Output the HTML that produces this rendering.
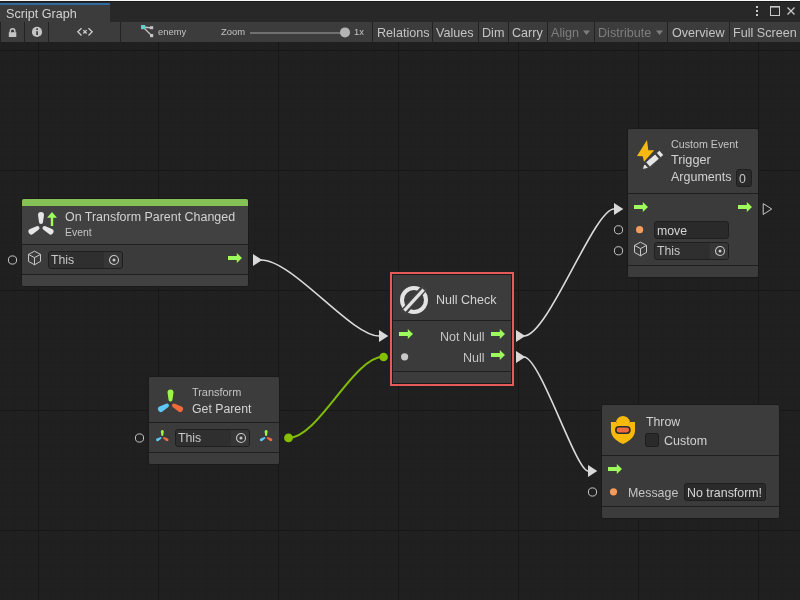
<!DOCTYPE html>
<html><head><meta charset="utf-8"><style>
html,body{margin:0;padding:0;}
body{width:800px;height:600px;position:relative;overflow:hidden;background:#202020;font-family:"Liberation Sans",sans-serif;}
.r{position:absolute;box-sizing:content-box;}
.t{position:absolute;white-space:nowrap;line-height:1;will-change:transform;}
#grid{position:absolute;left:0;top:42px;width:800px;height:558px;background-color:#202020;
background-image:linear-gradient(to right,#171717 1px,transparent 1px),linear-gradient(to bottom,#171717 1px,transparent 1px),linear-gradient(to right,#1e1e1e 1px,transparent 1px),linear-gradient(to bottom,#1e1e1e 1px,transparent 1px);
background-size:120px 120px,120px 120px,12px 12px,12px 12px;
background-position:38px 8px,38px 8px,2px 8px,2px 8px;}
</style></head><body>
<div id="grid"></div>
<div class="r" style="left:0px;top:0px;width:800px;height:1px;background:#f8f8f8;"></div>
<div class="r" style="left:0px;top:1px;width:800px;height:1px;background:#191919;"></div>
<div class="r" style="left:0px;top:2px;width:800px;height:20px;background:#282828;"></div>
<div class="r" style="left:0px;top:3px;width:110px;height:19px;background:#3c3c3c;"></div>
<div class="r" style="left:0px;top:3px;width:110px;height:2px;background:#2f6aa2;border-top-right-radius:1px"></div>
<div class="t" style="left:5.60px;top:8.00px;font-size:12.6px;color:#d2d2d2;">Script Graph</div>
<svg class="r" style="left:750px;top:2px" width="50" height="20" viewBox="0 0 50 20">
<rect x="6" y="4" width="2" height="2" fill="#c8c8c8"/><rect x="6" y="8" width="2" height="2" fill="#c8c8c8"/><rect x="6" y="12" width="2" height="2" fill="#c8c8c8"/>
<rect x="20.5" y="4.5" width="9" height="9" fill="none" stroke="#c8c8c8" stroke-width="1"/><rect x="20" y="4" width="10" height="1.6" fill="#c8c8c8"/>
<path d="M37.5 5.5 L44.5 12.5 M44.5 5.5 L37.5 12.5" stroke="#c8c8c8" stroke-width="1.3"/>
</svg>
<div class="r" style="left:0px;top:22px;width:800px;height:20px;background:#3c3c3c;"></div>
<div class="r" style="left:0px;top:22px;width:1px;height:20px;background:#232323;"></div>
<div class="r" style="left:24px;top:22px;width:1px;height:20px;background:#232323;"></div>
<div class="r" style="left:48px;top:22px;width:1px;height:20px;background:#232323;"></div>
<div class="r" style="left:120px;top:22px;width:1px;height:20px;background:#232323;"></div>
<div class="r" style="left:372px;top:22px;width:1px;height:20px;background:#232323;"></div>
<div class="r" style="left:432px;top:22px;width:1px;height:20px;background:#232323;"></div>
<div class="r" style="left:478px;top:22px;width:1px;height:20px;background:#232323;"></div>
<div class="r" style="left:508px;top:22px;width:1px;height:20px;background:#232323;"></div>
<div class="r" style="left:547px;top:22px;width:1px;height:20px;background:#232323;"></div>
<div class="r" style="left:594px;top:22px;width:1px;height:20px;background:#232323;"></div>
<div class="r" style="left:667px;top:22px;width:1px;height:20px;background:#232323;"></div>
<div class="r" style="left:729px;top:22px;width:1px;height:20px;background:#232323;"></div>
<svg class="r" style="left:0px;top:22px" width="24" height="20" viewBox="0 0 24 20">
<path d="M10.3 10.5 V9 a2.3 2.3 0 0 1 4.6 0 V10.5" fill="none" stroke="#c4c4c4" stroke-width="1.4"/>
<rect x="8.8" y="10.2" width="7.5" height="4.8" fill="#c4c4c4"/></svg>
<svg class="r" style="left:25px;top:22px" width="23" height="20" viewBox="0 0 23 20">
<circle cx="12" cy="9.9" r="5.1" fill="#c4c4c4"/><rect x="11.2" y="9.2" width="1.7" height="3.8" fill="#3c3c3c"/><rect x="11.2" y="6.4" width="1.7" height="1.6" fill="#3c3c3c"/></svg>
<svg class="r" style="left:65px;top:22px" width="40" height="20" viewBox="0 0 40 20">
<path d="M16.5 6.2 L12.8 9.8 L16.5 13.5 M23.5 6.2 L27.2 9.8 L23.5 13.5 M18.3 8.1 L21.7 11.5 M21.7 8.1 L18.3 11.5" fill="none" stroke="#d0d0d0" stroke-width="1.25"/></svg>
<svg class="r" style="left:141px;top:25px" width="13" height="13" viewBox="0 0 13 13">
<path d="M2 2 L11 3 M2 2 L10.5 10.5" stroke="#c4c4c4" stroke-width="1.3"/>
<rect x="0" y="0" width="4.2" height="4.2" fill="#5bd3c8"/><rect x="9" y="1.2" width="3.2" height="3" fill="#c4c4c4"/><rect x="9" y="9" width="3.2" height="3.2" fill="#c4c4c4"/></svg>
<div class="t" style="left:157.80px;top:27.00px;font-size:9.4px;color:#c4c4c4;">enemy</div>
<div class="t" style="left:220.60px;top:27.00px;font-size:9.4px;color:#c4c4c4;">Zoom</div>
<div class="r" style="left:250px;top:32px;width:95px;height:2px;background:#707070;"></div>
<svg class="r" style="left:339px;top:26px" width="12" height="12"><circle cx="6" cy="6.4" r="5" fill="#b4b4b4"/></svg>
<div class="t" style="left:353.60px;top:27.00px;font-size:9.4px;color:#c4c4c4;">1x</div>
<div class="t" style="left:376.60px;top:27.00px;font-size:12.6px;color:#c4c4c4;">Relations</div>
<div class="t" style="left:436.20px;top:27.00px;font-size:12.6px;color:#c4c4c4;">Values</div>
<div class="t" style="left:482.20px;top:27.00px;font-size:12.6px;color:#c4c4c4;">Dim</div>
<div class="t" style="left:511.80px;top:27.00px;font-size:12.6px;color:#c4c4c4;">Carry</div>
<div class="t" style="left:551.00px;top:27.00px;font-size:12.6px;color:#7e7e7e;">Align</div>
<svg class="r" style="left:583px;top:30px" width="8" height="6"><path d="M0 0.5 H7 L3.5 5Z" fill="#7e7e7e"/></svg>
<div class="t" style="left:597.60px;top:27.00px;font-size:12.6px;color:#7e7e7e;">Distribute</div>
<svg class="r" style="left:656px;top:30px" width="8" height="6"><path d="M0 0.5 H7 L3.5 5Z" fill="#7e7e7e"/></svg>
<div class="t" style="left:671.60px;top:27.00px;font-size:12.6px;color:#c4c4c4;">Overview</div>
<div class="t" style="left:732.80px;top:27.00px;font-size:12.6px;color:#c4c4c4;">Full Screen</div>
<svg class="r" style="left:0;top:0" width="800" height="600"><path d="M261 260 C293 260 351 336 379 336" fill="none" stroke="#dadada" stroke-width="1.6"/><path d="M288.5 437.9 C318.5 437.9 353.3 356.8 383.3 356.8" fill="none" stroke="#80bc08" stroke-width="2"/><path d="M524 336 C548 336 594 209 614 209" fill="none" stroke="#dadada" stroke-width="1.6"/><path d="M524 357 C540 357 576 471 588 471" fill="none" stroke="#dadada" stroke-width="1.6"/></svg>
<div class="r" style="left:21px;top:198px;width:226px;height:87px;border:1px solid #1a1a1a;border-radius:3px;background:#3b3b3b;overflow:hidden"><div class="r" style="left:0;top:0;width:226px;height:45px;background:#414141"></div><div class="r" style="left:0;top:45px;width:226px;height:1px;background:#1f1f1f"></div><div class="r" style="left:0;top:75px;width:226px;height:1px;background:#1f1f1f"></div><div class="r" style="left:0;top:76px;width:226px;height:11px;background:#414141"></div><div class="r" style="left:0;top:0;width:226px;height:7px;background:#85c256"></div></div>
<svg class="r" style="left:25px;top:210px" width="32" height="32"><path d="M18.00 12.00 L19.00 5.00 A3 3 0 0 0 13.00 5.00 L14.00 12.00 A2 2 0 0 0 18.00 12.00 Z" fill="#e6e6e6"/><path d="M11.54 16.27 L4.97 18.90 A3 3 0 0 0 7.97 24.10 L13.54 19.73 A2 2 0 0 0 11.54 16.27 Z" fill="#e6e6e6"/><path d="M18.46 19.73 L24.03 24.10 A3 3 0 0 0 27.03 18.90 L20.46 16.27 A2 2 0 0 0 18.46 19.73 Z" fill="#e6e6e6"/></svg>
<svg class="r" style="left:46px;top:211px" width="12" height="16" viewBox="0 0 12 16"><path d="M6 1 L11 6.8 H7.2 V15 H4.8 V6.8 H1Z" fill="#9efb5c"/></svg>
<div class="t" style="left:64.60px;top:211.00px;font-size:12.45px;color:#d2d2d2;">On Transform Parent Changed</div>
<div class="t" style="left:64.80px;top:228.00px;font-size:10.4px;color:#c4c4c4;">Event</div>
<svg class="r" style="left:6px;top:254px" width="13" height="13"><circle cx="6.5" cy="6" r="4.1" fill="none" stroke="#c8c8c8" stroke-width="1"/></svg>
<svg class="r" style="left:27px;top:250px" width="16" height="16" viewBox="0 0 16 16"><path d="M7.5 1.2 L13.5 4.4 V11.4 L7.5 14.8 L1.5 11.4 V4.4Z M1.5 4.4 L7.5 7.6 L13.5 4.4 M7.5 7.6 V14.8" fill="none" stroke="#c8c8c8" stroke-width="1" stroke-linejoin="round"/></svg>
<div class="r" style="left:48px;top:251px;width:73px;height:16px;border:1px solid #1f1f1f;border-radius:3px;background:#2f2f2f;overflow:hidden"><div class="r" style="left:55px;top:0;width:18px;height:16px;background:#363636"></div></div>
<div class="t" style="left:50.80px;top:254.00px;font-size:12.3px;color:#c8c8c8;">This</div>
<svg class="r" style="left:106.5px;top:253.0px" width="14" height="14"><circle cx="7" cy="7" r="4.5" fill="none" stroke="#c8c8c8" stroke-width="1.1"/><circle cx="7" cy="7" r="1.5" fill="#c8c8c8"/></svg>
<svg class="r" style="left:228px;top:253px" width="14" height="10" viewBox="0 0 14 10"><path d="M0 3 H8.8 V0 L14 5 L8.8 10 V7 H0Z" fill="#9efb5c"/></svg>
<svg class="r" style="left:253px;top:254px" width="10" height="12" viewBox="0 0 10 12"><path d="M0 0 L9.3 6 L0 12Z" fill="#d9d9d9"/></svg>
<div class="r" style="left:148px;top:376px;width:130px;height:87px;border:1px solid #1a1a1a;border-radius:3px;background:#3b3b3b;overflow:hidden"><div class="r" style="left:0;top:0;width:130px;height:45px;background:#3c3c3c"></div><div class="r" style="left:0;top:45px;width:130px;height:1px;background:#1f1f1f"></div><div class="r" style="left:0;top:75px;width:130px;height:1px;background:#1f1f1f"></div><div class="r" style="left:0;top:76px;width:130px;height:11px;background:#3c3c3c"></div></div>
<svg class="r" style="left:154px;top:387px" width="32" height="32"><path d="M18.50 12.50 L19.50 5.50 A3 3 0 0 0 13.50 5.50 L14.50 12.50 A2 2 0 0 0 18.50 12.50 Z" fill="#9ef54a"/><path d="M12.04 16.77 L5.47 19.40 A3 3 0 0 0 8.47 24.60 L14.04 20.23 A2 2 0 0 0 12.04 16.77 Z" fill="#5ec8f7"/><path d="M18.96 20.23 L24.53 24.60 A3 3 0 0 0 27.53 19.40 L20.96 16.77 A2 2 0 0 0 18.96 20.23 Z" fill="#f26a3c"/></svg>
<div class="t" style="left:191.90px;top:387.00px;font-size:10.9px;color:#c4c4c4;">Transform</div>
<div class="t" style="left:191.90px;top:403.00px;font-size:12.3px;color:#d2d2d2;">Get Parent</div>
<svg class="r" style="left:133px;top:432px" width="13" height="13"><circle cx="6.5" cy="6" r="4.1" fill="none" stroke="#c8c8c8" stroke-width="1"/></svg>
<svg class="r" style="left:154px;top:429px" width="16" height="16"><path d="M9.30 6.00 L9.80 2.50 A1.5 1.5 0 0 0 6.80 2.50 L7.30 6.00 A1.0 1.0 0 0 0 9.30 6.00 Z" fill="#9ef54a"/><path d="M6.07 8.13 L2.79 9.45 A1.5 1.5 0 0 0 4.29 12.05 L7.07 9.87 A1.0 1.0 0 0 0 6.07 8.13 Z" fill="#5ec8f7"/><path d="M9.53 9.87 L12.31 12.05 A1.5 1.5 0 0 0 13.81 9.45 L10.53 8.13 A1.0 1.0 0 0 0 9.53 9.87 Z" fill="#f26a3c"/></svg>
<div class="r" style="left:175px;top:429px;width:73px;height:16px;border:1px solid #1f1f1f;border-radius:3px;background:#2f2f2f;overflow:hidden"><div class="r" style="left:55px;top:0;width:18px;height:16px;background:#363636"></div></div>
<div class="t" style="left:178.00px;top:432.00px;font-size:12.3px;color:#c8c8c8;">This</div>
<svg class="r" style="left:233.5px;top:431.0px" width="14" height="14"><circle cx="7" cy="7" r="4.5" fill="none" stroke="#c8c8c8" stroke-width="1.1"/><circle cx="7" cy="7" r="1.5" fill="#c8c8c8"/></svg>
<svg class="r" style="left:258px;top:429px" width="16" height="16"><path d="M9.10 6.00 L9.60 2.50 A1.5 1.5 0 0 0 6.60 2.50 L7.10 6.00 A1.0 1.0 0 0 0 9.10 6.00 Z" fill="#9ef54a"/><path d="M5.87 8.13 L2.59 9.45 A1.5 1.5 0 0 0 4.09 12.05 L6.87 9.87 A1.0 1.0 0 0 0 5.87 8.13 Z" fill="#5ec8f7"/><path d="M9.33 9.87 L12.11 12.05 A1.5 1.5 0 0 0 13.61 9.45 L10.33 8.13 A1.0 1.0 0 0 0 9.33 9.87 Z" fill="#f26a3c"/></svg>
<svg class="r" style="left:282px;top:431px" width="13" height="13"><circle cx="6.5" cy="6.899999999999977" r="4.4" fill="#84c000"/></svg>
<div class="r" style="left:390px;top:272px;width:124px;height:114px;background:#e85a5a;"></div>
<div class="r" style="left:392px;top:274px;width:118px;height:108px;border:1px solid #1a1a1a;border-radius:0px;background:#3b3b3b;overflow:hidden"><div class="r" style="left:0;top:0;width:118px;height:45px;background:#3c3c3c"></div><div class="r" style="left:0;top:45px;width:118px;height:1px;background:#1f1f1f"></div><div class="r" style="left:0;top:96px;width:118px;height:1px;background:#1f1f1f"></div><div class="r" style="left:0;top:97px;width:118px;height:11px;background:#3c3c3c"></div></div>
<svg class="r" style="left:398px;top:284px" width="32" height="32" viewBox="0 0 32 32">
<circle cx="16" cy="16" r="12" fill="none" stroke="#e3e3e3" stroke-width="4"/>
<path d="M27 3 L5 29" stroke="#414141" stroke-width="7"/>
<path d="M25.6 5.6 L6.4 26.6" stroke="#e3e3e3" stroke-width="3.2"/></svg>
<div class="t" style="left:435.50px;top:294.00px;font-size:12.5px;color:#d2d2d2;">Null Check</div>
<svg class="r" style="left:379px;top:330px" width="10" height="12" viewBox="0 0 10 12"><path d="M0 0 L9.3 6 L0 12Z" fill="#d9d9d9"/></svg>
<svg class="r" style="left:377px;top:351px" width="13" height="13"><circle cx="6.600000000000023" cy="6" r="4.3" fill="#84c000"/></svg>
<svg class="r" style="left:399px;top:329px" width="14" height="10" viewBox="0 0 14 10"><path d="M0 3 H8.8 V0 L14 5 L8.8 10 V7 H0Z" fill="#9efb5c"/></svg>
<svg class="r" style="left:398px;top:350px" width="13" height="13"><circle cx="6.600000000000023" cy="6.800000000000011" r="3.6" fill="#c8c8c8"/></svg>
<div class="t" style="right:315.50px;top:331.00px;font-size:12.5px;color:#c4c4c4;">Not Null</div>
<div class="t" style="right:315.50px;top:352.00px;font-size:12.5px;color:#c4c4c4;">Null</div>
<svg class="r" style="left:491px;top:329px" width="14" height="10" viewBox="0 0 14 10"><path d="M0 3 H8.8 V0 L14 5 L8.8 10 V7 H0Z" fill="#9efb5c"/></svg>
<svg class="r" style="left:491px;top:350px" width="14" height="10" viewBox="0 0 14 10"><path d="M0 3 H8.8 V0 L14 5 L8.8 10 V7 H0Z" fill="#9efb5c"/></svg>
<svg class="r" style="left:516px;top:330px" width="10" height="12" viewBox="0 0 10 12"><path d="M0 0 L9.3 6 L0 12Z" fill="#d9d9d9"/></svg>
<svg class="r" style="left:516px;top:351px" width="10" height="12" viewBox="0 0 10 12"><path d="M0 0 L9.3 6 L0 12Z" fill="#d9d9d9"/></svg>
<div class="r" style="left:627px;top:128px;width:130px;height:148px;border:1px solid #1a1a1a;border-radius:3px;background:#3b3b3b;overflow:hidden"><div class="r" style="left:0;top:0;width:130px;height:64px;background:#3c3c3c"></div><div class="r" style="left:0;top:64px;width:130px;height:1px;background:#1f1f1f"></div><div class="r" style="left:0;top:136px;width:130px;height:1px;background:#1f1f1f"></div><div class="r" style="left:0;top:137px;width:130px;height:11px;background:#3c3c3c"></div></div>
<svg class="r" style="left:630px;top:134px" width="40" height="40" viewBox="0 0 40 40">
<path d="M17 5.9 L18.3 16.2 H24.3 L14 27.7 L12.7 22.3 L7 22 Z" fill="#f6b90e"/>
<g transform="translate(12.9 34.9) rotate(-41)">
<path d="M-1.2 0 L5 -3.6 V3.6 Z" fill="#e6e6e6" stroke="#414141" stroke-width="1.2" stroke-linejoin="round"/>
<rect x="6.2" y="-3.4" width="13" height="6.8" fill="#e6e6e6" stroke="#414141" stroke-width="1.2"/>
<rect x="20.4" y="-3.4" width="4.6" height="6.8" fill="#e6e6e6" stroke="#414141" stroke-width="1.2"/>
</g></svg>
<div class="t" style="left:670.80px;top:139.00px;font-size:10.7px;color:#c4c4c4;">Custom Event</div>
<div class="t" style="left:670.60px;top:154.00px;font-size:12.7px;color:#d2d2d2;">Trigger</div>
<div class="t" style="left:670.60px;top:171.00px;font-size:12.5px;color:#d2d2d2;">Arguments</div>
<div class="r" style="left:736px;top:169px;width:14px;height:16px;border:1px solid #1f1f1f;border-radius:3px;background:#2a2a2a"></div>
<div class="t" style="left:739.30px;top:173.00px;font-size:12.3px;color:#c8c8c8;">0</div>
<svg class="r" style="left:614px;top:203px" width="10" height="12" viewBox="0 0 10 12"><path d="M0 0 L9.3 6 L0 12Z" fill="#d9d9d9"/></svg>
<svg class="r" style="left:634px;top:202px" width="14" height="10" viewBox="0 0 14 10"><path d="M0 3 H8.8 V0 L14 5 L8.8 10 V7 H0Z" fill="#9efb5c"/></svg>
<svg class="r" style="left:738px;top:202px" width="14" height="10" viewBox="0 0 14 10"><path d="M0 3 H8.8 V0 L14 5 L8.8 10 V7 H0Z" fill="#9efb5c"/></svg>
<svg class="r" style="left:762px;top:202px" width="11" height="13" viewBox="0 0 11 13"><path d="M1.2 1.6 L9.7 7 L1.2 12.5Z" fill="none" stroke="#c8c8c8" stroke-width="1"/></svg>
<svg class="r" style="left:612px;top:223px" width="13" height="13"><circle cx="6.5" cy="6.800000000000011" r="4.1" fill="none" stroke="#c8c8c8" stroke-width="1"/></svg>
<svg class="r" style="left:633px;top:223px" width="13" height="13"><circle cx="6.600000000000023" cy="6.699999999999989" r="3.6" fill="#f59b5b"/></svg>
<div class="r" style="left:654px;top:221px;width:73px;height:16px;border:1px solid #1f1f1f;border-radius:3px;background:#2a2a2a;overflow:hidden"></div>
<div class="t" style="left:657.30px;top:225.00px;font-size:12.3px;color:#d6d6d6;">move</div>
<svg class="r" style="left:612px;top:244px" width="13" height="13"><circle cx="6.5" cy="6.800000000000011" r="4.1" fill="none" stroke="#c8c8c8" stroke-width="1"/></svg>
<svg class="r" style="left:633px;top:241px" width="16" height="16" viewBox="0 0 16 16"><path d="M7.5 1.2 L13.5 4.4 V11.4 L7.5 14.8 L1.5 11.4 V4.4Z M1.5 4.4 L7.5 7.6 L13.5 4.4 M7.5 7.6 V14.8" fill="none" stroke="#c8c8c8" stroke-width="1" stroke-linejoin="round"/></svg>
<div class="r" style="left:654px;top:242px;width:73px;height:16px;border:1px solid #1f1f1f;border-radius:3px;background:#2f2f2f;overflow:hidden"><div class="r" style="left:55px;top:0;width:18px;height:16px;background:#363636"></div></div>
<div class="t" style="left:656.60px;top:245.00px;font-size:12.3px;color:#c8c8c8;">This</div>
<svg class="r" style="left:712.5px;top:244.0px" width="14" height="14"><circle cx="7" cy="7" r="4.5" fill="none" stroke="#c8c8c8" stroke-width="1.1"/><circle cx="7" cy="7" r="1.5" fill="#c8c8c8"/></svg>
<div class="r" style="left:601px;top:404px;width:177px;height:113px;border:1px solid #1a1a1a;border-radius:3px;background:#3b3b3b;overflow:hidden"><div class="r" style="left:0;top:0;width:177px;height:50px;background:#3c3c3c"></div><div class="r" style="left:0;top:50px;width:177px;height:1px;background:#1f1f1f"></div><div class="r" style="left:0;top:101px;width:177px;height:1px;background:#1f1f1f"></div><div class="r" style="left:0;top:102px;width:177px;height:11px;background:#3c3c3c"></div></div>
<svg class="r" style="left:605px;top:410px" width="36" height="40" viewBox="0 0 36 40">
<path d="M5.9 12 H10.9 A7.2 7.2 0 0 1 25.1 12 H30 V20.5 C30 27 24 31.5 18 34 C12 31.5 6 27 6 20.5 Z" fill="#f7ba0c"/>
<path d="M10.6 11.6 L11.4 12.4 M25.4 11.6 L24.6 12.4" stroke="#414141" stroke-width="1"/>
<rect x="10.8" y="16.8" width="14.1" height="6.4" rx="3.2" fill="#f26a3c" stroke="#2c2c2c" stroke-width="1.6"/></svg>
<div class="t" style="left:645.60px;top:416.00px;font-size:12.3px;color:#d2d2d2;">Throw</div>
<div class="r" style="left:645px;top:433px;width:12px;height:12px;border:1px solid #1f1f1f;border-radius:2px;background:#2a2a2a"></div>
<div class="t" style="left:663.60px;top:435.00px;font-size:12.5px;color:#d2d2d2;">Custom</div>
<svg class="r" style="left:588px;top:465px" width="10" height="12" viewBox="0 0 10 12"><path d="M0 0 L9.3 6 L0 12Z" fill="#d9d9d9"/></svg>
<svg class="r" style="left:608px;top:464px" width="14" height="10" viewBox="0 0 14 10"><path d="M0 3 H8.8 V0 L14 5 L8.8 10 V7 H0Z" fill="#9efb5c"/></svg>
<svg class="r" style="left:586px;top:486px" width="13" height="13"><circle cx="6.5" cy="6" r="4.1" fill="none" stroke="#c8c8c8" stroke-width="1"/></svg>
<svg class="r" style="left:607px;top:485px" width="13" height="13"><circle cx="6.5" cy="6.800000000000011" r="3.6" fill="#f59b5b"/></svg>
<div class="t" style="left:627.60px;top:487.00px;font-size:12.4px;color:#c4c4c4;">Message</div>
<div class="r" style="left:684px;top:483px;width:80px;height:16px;border:1px solid #1f1f1f;border-radius:3px;background:#2a2a2a"></div>
<div class="t" style="left:686.60px;top:487.00px;font-size:12.4px;color:#d6d6d6;">No transform!</div>
</body></html>
